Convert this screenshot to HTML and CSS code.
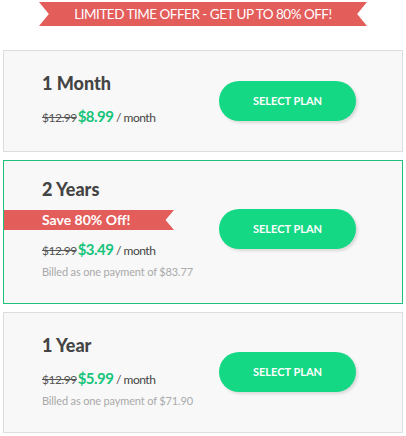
FILE: index.html
```html
<!DOCTYPE html>
<html>
<head>
<meta charset="utf-8">
<link rel="stylesheet" href="styles.css">
</head>
<body>
<div class="page">
  <div class="offer"><span>LIMITED TIME OFFER - GET UP TO 80% OFF!</span></div>

  <div class="plan plan-month">
    <div class="info">
      <div class="title">1 Month</div>
      <div class="price"><s class="old">$12.99</s><b class="new">$8.99</b> / month</div>
    </div>
    <a class="btn">SELECT PLAN</a>
  </div>

  <div class="plan plan-best">
    <div class="info">
      <div class="title">2 Years</div>
      <div class="ribbon">Save 80% Off!</div>
      <div class="price"><s class="old">$12.99</s><b class="new">$3.49</b> / month</div>
      <div class="billed">Billed as one payment of $83.77</div>
    </div>
    <a class="btn">SELECT PLAN</a>
  </div>

  <div class="plan plan-year">
    <div class="info">
      <div class="title">1 Year</div>
      <div class="price"><s class="old">$12.99</s><b class="new">$5.99</b> / month</div>
      <div class="billed">Billed as one payment of $71.90</div>
    </div>
    <a class="btn">SELECT PLAN</a>
  </div>
</div>
</body>
</html>
```
FILE: styles.css
```css
* { box-sizing: border-box; }
html, body { margin: 0; padding: 0; background: #fff; }
body { font-family: Lato, "Open Sans", sans-serif; color: #444; }
.page { padding: 2px 3px 0 3px; display: flex; flex-direction: column; }

.offer {
  align-self: center;
  width: 328px;
  height: 24px;
  background: #e35d5b;
  clip-path: polygon(0 0, 100% 0, 97% 50%, 100% 100%, 0 100%, 3% 50%);
  color: #fff;
  font-size: 13.5px;
  line-height: 24px;
  text-align: center;
  letter-spacing: -0.5px;
  margin-bottom: 24px;
}

.plan {
  background: #f8f8f8;
  border: 1px solid #dddddd;
  display: flex;
  align-items: center;
  margin-bottom: 8px;
  padding: 21px 0 22px 0;
}
.plan-best { border-color: #1fc07a; padding-top: 17px; padding-bottom: 23px; }
.plan-year { padding-bottom: 23px; }

.info { width: 215px; flex: none; }
.title {
  font-size: 18px;
  font-weight: 900;
  line-height: 22px;
  padding-left: 38px;
  color: #444;
}
.ribbon {
  margin-top: 10px;
  width: 170px;
  height: 20px;
  background: #e35d5b;
  clip-path: polygon(0 0, 100% 0, 95% 50%, 100% 100%, 0 100%);
  color: #fff;
  font-size: 14px;
  font-weight: bold;
  line-height: 20px;
  padding-left: 38px;
}
.price {
  margin-top: 11px;
  padding-left: 38px;
  font-size: 12px;
  line-height: 22px;
  letter-spacing: -0.5px;
  color: #444;
}
.plan-best .price { margin-top: 8px; }
.old { color: #555; text-decoration: line-through; margin-right: 1px; }
.new { color: #16c47a; font-size: 15px; font-weight: bold; }
.billed {
  padding-left: 38px;
  font-size: 11px;
  line-height: 16px;
  letter-spacing: -0.15px;
  color: #aaa;
  margin-top: 2px;
}

.btn {
  display: block;
  width: 137px;
  height: 40px;
  border-radius: 20px;
  background: #15d884;
  color: #fff;
  font-size: 11px;
  font-weight: bold;
  line-height: 40px;
  text-align: center;
  box-shadow: 2px 2px 3px rgba(0,0,0,0.12);
}
```
